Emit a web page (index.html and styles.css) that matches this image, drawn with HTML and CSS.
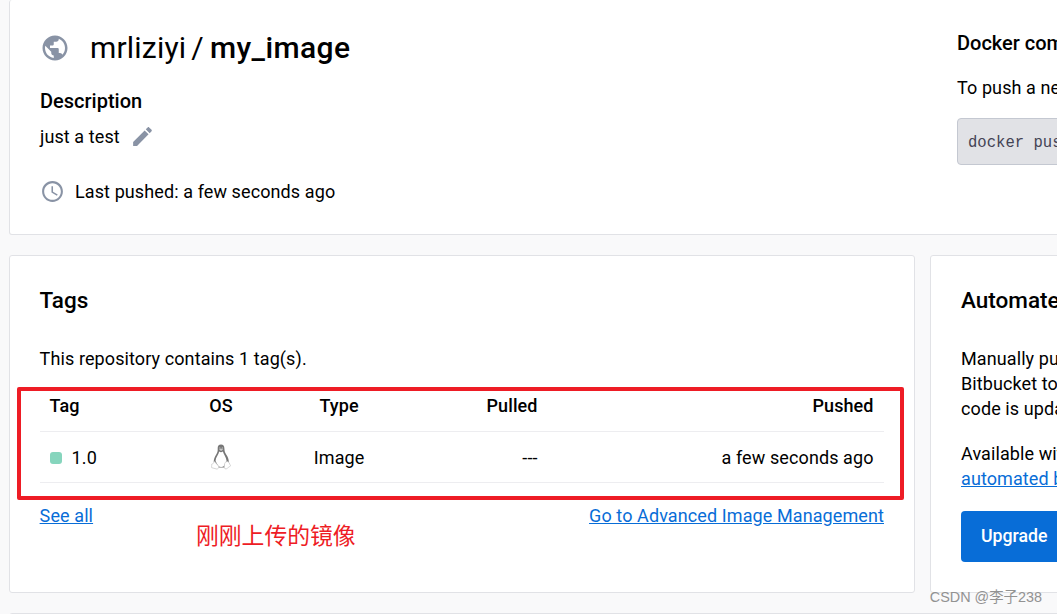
FILE: index.html
```html
<!DOCTYPE html>
<html lang="en">

<head>
    <meta charset="UTF-8">
    <meta name="viewport" content="width=device-width, initial-scale=1.0">
    <title>mrliziyi/my_image</title>

    <link rel="stylesheet" href="styles.css">
</head>

<body>
    <main class="page">
        <section class="card summary">
            <div class="repo">
                <h1 class="repo-name">
                    <svg class="icon globe" viewBox="0 0 24 24">
                        <path d="M12 2C6.480 2 2 6.480 2 12s4.480 10 10 10 10-4.480 10-10S17.520 2 12 2zm-1 17.930c-3.950-.490-7-3.850-7-7.930 0-.620.080-1.210.210-1.790L9 15v1c0 1.100.900 2 2 2v1.930zm6.900-2.540c-.260-.810-1-1.390-1.900-1.390h-1v-3c0-.550-.450-1-1-1H8v-2h2c.550 0 1-.450 1-1V7h2c1.100 0 2-.900 2-2v-.410c2.930 1.190 5 4.060 5 7.410 0 2.080-.800 3.970-2.100 5.390z" />
                    </svg>
                    <span class="owner">mrliziyi</span>
                    <span class="slash">/</span>
                    <span class="name">my_image</span>
                </h1>
                <h2 class="label">Description</h2>
                <p class="description">
                    just a test
                    <svg class="icon pencil" viewBox="0 0 24 24">
                        <path d="M3 17.250V21h3.750L17.810 9.940l-3.750-3.750L3 17.250zM20.710 7.040c.390-.390.390-1.020 0-1.410l-2.340-2.340c-.390-.390-1.020-.390-1.410 0l-1.830 1.830 3.750 3.750 1.830-1.830z" />
                    </svg>
                </p>
                <p class="last-pushed">
                    <svg class="icon clock" viewBox="0 0 24 24">
                        <path d="M11.990 2C6.470 2 2 6.480 2 12s4.470 10 9.990 10C17.520 22 22 17.520 22 12S17.520 2 11.990 2zM12 20c-4.420 0-8-3.580-8-8s3.580-8 8-8 8 3.580 8 8-3.580 8-8 8zM12.500 7H11v6l5.250 3.150.750-1.230-4.500-2.670z" />
                    </svg>
                    Last pushed: a few seconds ago
                </p>
            </div>
            <div class="commands">
                <h2 class="label">Docker commands</h2>
                <p>To push a new tag to this repository,</p>
                <code class="command">docker push mrliziyi/my_image:tagname</code>
            </div>
        </section>

        <div class="columns">
            <section class="card tags">
                <h2 class="card-title">Tags</h2>
                <p>This repository contains 1 tag(s).</p>
                <table class="tag-table">
                    <thead>
                        <tr>
                            <th class="col-tag">Tag</th>
                            <th class="col-os">OS</th>
                            <th class="col-type">Type</th>
                            <th class="col-pulled">Pulled</th>
                            <th class="col-pushed">Pushed</th>
                        </tr>
                    </thead>
                    <tbody>
                        <tr>
                            <td class="col-tag"><span class="status"></span>1.0</td>
                            <td class="col-os">
                                <svg class="tux" viewBox="0 0 20 26">
                                    <path class="tux-body" d="M10 .500C7.700.500 6.600 2 6.700 4.300c.100 3-.200 4.200-1.500 6.200-1.500 2.400-2.400 4.300-2.500 7.500l4.300 5.500h6.500l4.300-5.500c0-3.300-1.200-5.500-2.600-7.600-1.300-2-1.700-3.300-1.800-6C13.300 1.900 12.300.500 10 .500z" />
                                    <path class="tux-belly" d="M8.200 7.500c1 1 2.500 1 3.700 0 .500 2.600 3.400 5.500 3.700 9.500l-2.600 5c-1.500 1.200-4.200 1.200-5.700 0L4.500 17c.200-3.800 3.200-6.500 3.700-9.500z" />
                                    <path class="tux-face" d="M8 5.500l2-1 2.200 1-2.100 1.600zM8.200 3.400h1.200v1H8.200zM10.800 3.400H12v1h-1.200z" />
                                    <path class="tux-foot" d="M3.400 17.500l4.200 4.600c.700 1.300-.200 2.900-1.900 2.900L.700 23.700c-.500-1 .200-1.700 0-3.500 1.600 0 1.600-1.500 2.700-2.700zM16.600 17.500c-1.300.200-2.600.500-2.900 2-.400 2-.800 4.700.300 5.300 1.800.800 3-1.600 5.400-2.700.500-.900-1-1.400-1.100-3.300z" />
                                </svg>
                            </td>
                            <td class="col-type">Image</td>
                            <td class="col-pulled">---</td>
                            <td class="col-pushed">a few seconds ago</td>
                        </tr>
                    </tbody>
                </table>
                <div class="table-links">
                    <a href="#">See all</a>
                    <a href="#">Go to Advanced Image Management</a>
                </div>
                <div class="highlight"></div>
                <p class="note" lang="zh">刚刚上传的镜像</p>
            </section>

            <section class="card builds">
                <h2 class="card-title">Automated Builds</h2>
                <p>
                    Manually pushing images to Hub? Connect<br>
                    Bitbucket to automatically build when your<br>
                    code is updated.
                </p>
                <p class="available">
                    Available with Pro, Team and Business<br>
                    <a href="#">automated builds</a>
                </p>
                <button class="upgrade">Upgrade</button>
            </section>
        </div>

        <section class="card next"></section>
    </main>

    <div class="watermark" lang="zh">CSDN @李子238</div>
</body>

</html>
```

FILE: styles.css
```css
* {
    margin: 0;
    padding: 0;
    box-sizing: border-box;
}

body {
    height: 614px;
    overflow: hidden;
    background-color: #f9f9fa;
    color: #000;
    font-family: Roboto, "Noto Sans CJK SC", sans-serif;
    font-size: 18px;
    letter-spacing: 0.1px;
    line-height: 25px;
}

a {
    color: #086dd7;
    text-decoration: underline;
}

.page {
    height: 614px;
    padding-left: 9px;
    overflow: hidden;
}

.card {
    background-color: #fff;
    border: 1px solid #e1e2e6;
    border-radius: 3px;
}

.icon {
    flex: none;
    fill: #8993a5;
}

.label {
    font-size: 20px;
    font-weight: 500;
    letter-spacing: 0;
    line-height: 25px;
}

/* repository summary */
.summary {
    display: flex;
    width: 1391px;
    height: 235px;
    border-top: none;
    padding-left: 30px;
}

.repo {
    width: 917px;
    padding-top: 28px;
}

.repo-name {
    display: flex;
    align-items: center;
    height: 40px;
    margin-bottom: 21px;
    font-size: 30px;
    font-weight: 400;
    letter-spacing: 0.2px;
    line-height: 38px;
}

.globe {
    width: 30px;
    height: 30px;
    margin-right: 20px;
}

.owner,
.slash,
.name {
    margin-top: -1px;
}

.slash {
    margin-left: 5px;
    margin-right: 6px;
}

.name {
    font-weight: 500;
    letter-spacing: 0.4px;
}

.description {
    display: flex;
    align-items: center;
    height: 25px;
    margin: 10px 0 30px;
}

.pencil {
    width: 25px;
    height: 25px;
    margin-left: 10px;
}

.last-pushed {
    display: flex;
    align-items: center;
}

.clock {
    width: 25px;
    height: 25px;
    margin-right: 10px;
}

.commands {
    padding-top: 31px;
}

.commands p {
    margin: 19px 0 18px;
}

.command {
    display: block;
    width: 400px;
    height: 47px;
    padding: 0 10px;
    background-color: #e1e2e6;
    border: 1px solid #c4c8d1;
    border-radius: 4px;
    color: #445;
    font-family: "Liberation Mono", monospace;
    font-size: 15.600px;
    letter-spacing: 0;
    line-height: 49px;
}

/* tags and builds */
.columns {
    display: flex;
    gap: 15px;
    width: 1361px;
    margin: 20px 0;
}

.columns .card {
    height: 338px;
    padding: 31px 30px 0;
}

.card-title {
    margin-bottom: 32px;
    font-size: 22.500px;
    font-weight: 500;
    letter-spacing: 0;
    line-height: 27px;
}

.columns .tags {
    position: relative;
    width: 906px;
    padding-left: 29.600px;
}

.tag-table {
    width: 844px;
    margin-top: 10px;
    border-collapse: collapse;
    table-layout: fixed;
}

.tag-table th,
.tag-table td {
    height: 51px;
    padding: 2px 10px 0;
    border-bottom: 1px solid #ededf0;
    vertical-align: middle;
}

.tag-table th {
    height: 50px;
    padding-top: 0;
    font-weight: 500;
}

.tag-table .col-tag {
    width: 138px;
    text-align: left;
}

.col-os {
    width: 87px;
    text-align: center;
}

.col-type {
    width: 149px;
    text-align: center;
}

.tag-table .col-pulled {
    width: 134px;
    text-align: right;
}

.tag-table .col-pushed {
    text-align: right;
}

.status {
    display: inline-block;
    width: 12px;
    height: 12px;
    margin-right: 10px;
    background-color: #86d5bd;
    border-radius: 3px;
    vertical-align: 0;
}

.tux {
    display: block;
    width: 20px;
    height: 26px;
    margin: -2px auto 0;
}

.tux-body {
    fill: #777;
}

.tux-belly {
    fill: #fff;
}

.tux-face {
    fill: #c8c8c8;
}

.tux-foot {
    fill: #fff;
    stroke: #c4c4c4;
    stroke-width: 0.7;
}

.table-links {
    display: flex;
    justify-content: space-between;
    margin-top: 20px;
}

.highlight {
    position: absolute;
    top: 131px;
    left: 7px;
    width: 887px;
    height: 113px;
    border: 4px solid #ee1c25;
    border-radius: 2px;
}

.note {
    position: absolute;
    top: 263px;
    left: 186px;
    color: #ee1c25;
    font-family: "Noto Sans CJK SC", sans-serif;
    font-size: 22.800px;
    letter-spacing: 0;
    line-height: 32px;
}

.builds {
    width: 440px;
    white-space: nowrap;
}

.available {
    margin-top: 20px;
}

.upgrade {
    height: 51px;
    margin-top: 20px;
    padding: 0 20px 2px;
    background-color: #086dd7;
    border: none;
    border-radius: 4px;
    color: #fff;
    font-family: inherit;
    font-size: 17.700px;
    font-weight: 500;
}

.next {
    width: 1361px;
    height: 40px;
}

.watermark {
    position: absolute;
    right: 15px;
    bottom: 7px;
    color: #929292;
    font-family: "Liberation Sans", "Noto Sans CJK SC", sans-serif;
    font-size: 14.400px;
    letter-spacing: 0;
    line-height: 20px;
}
```
